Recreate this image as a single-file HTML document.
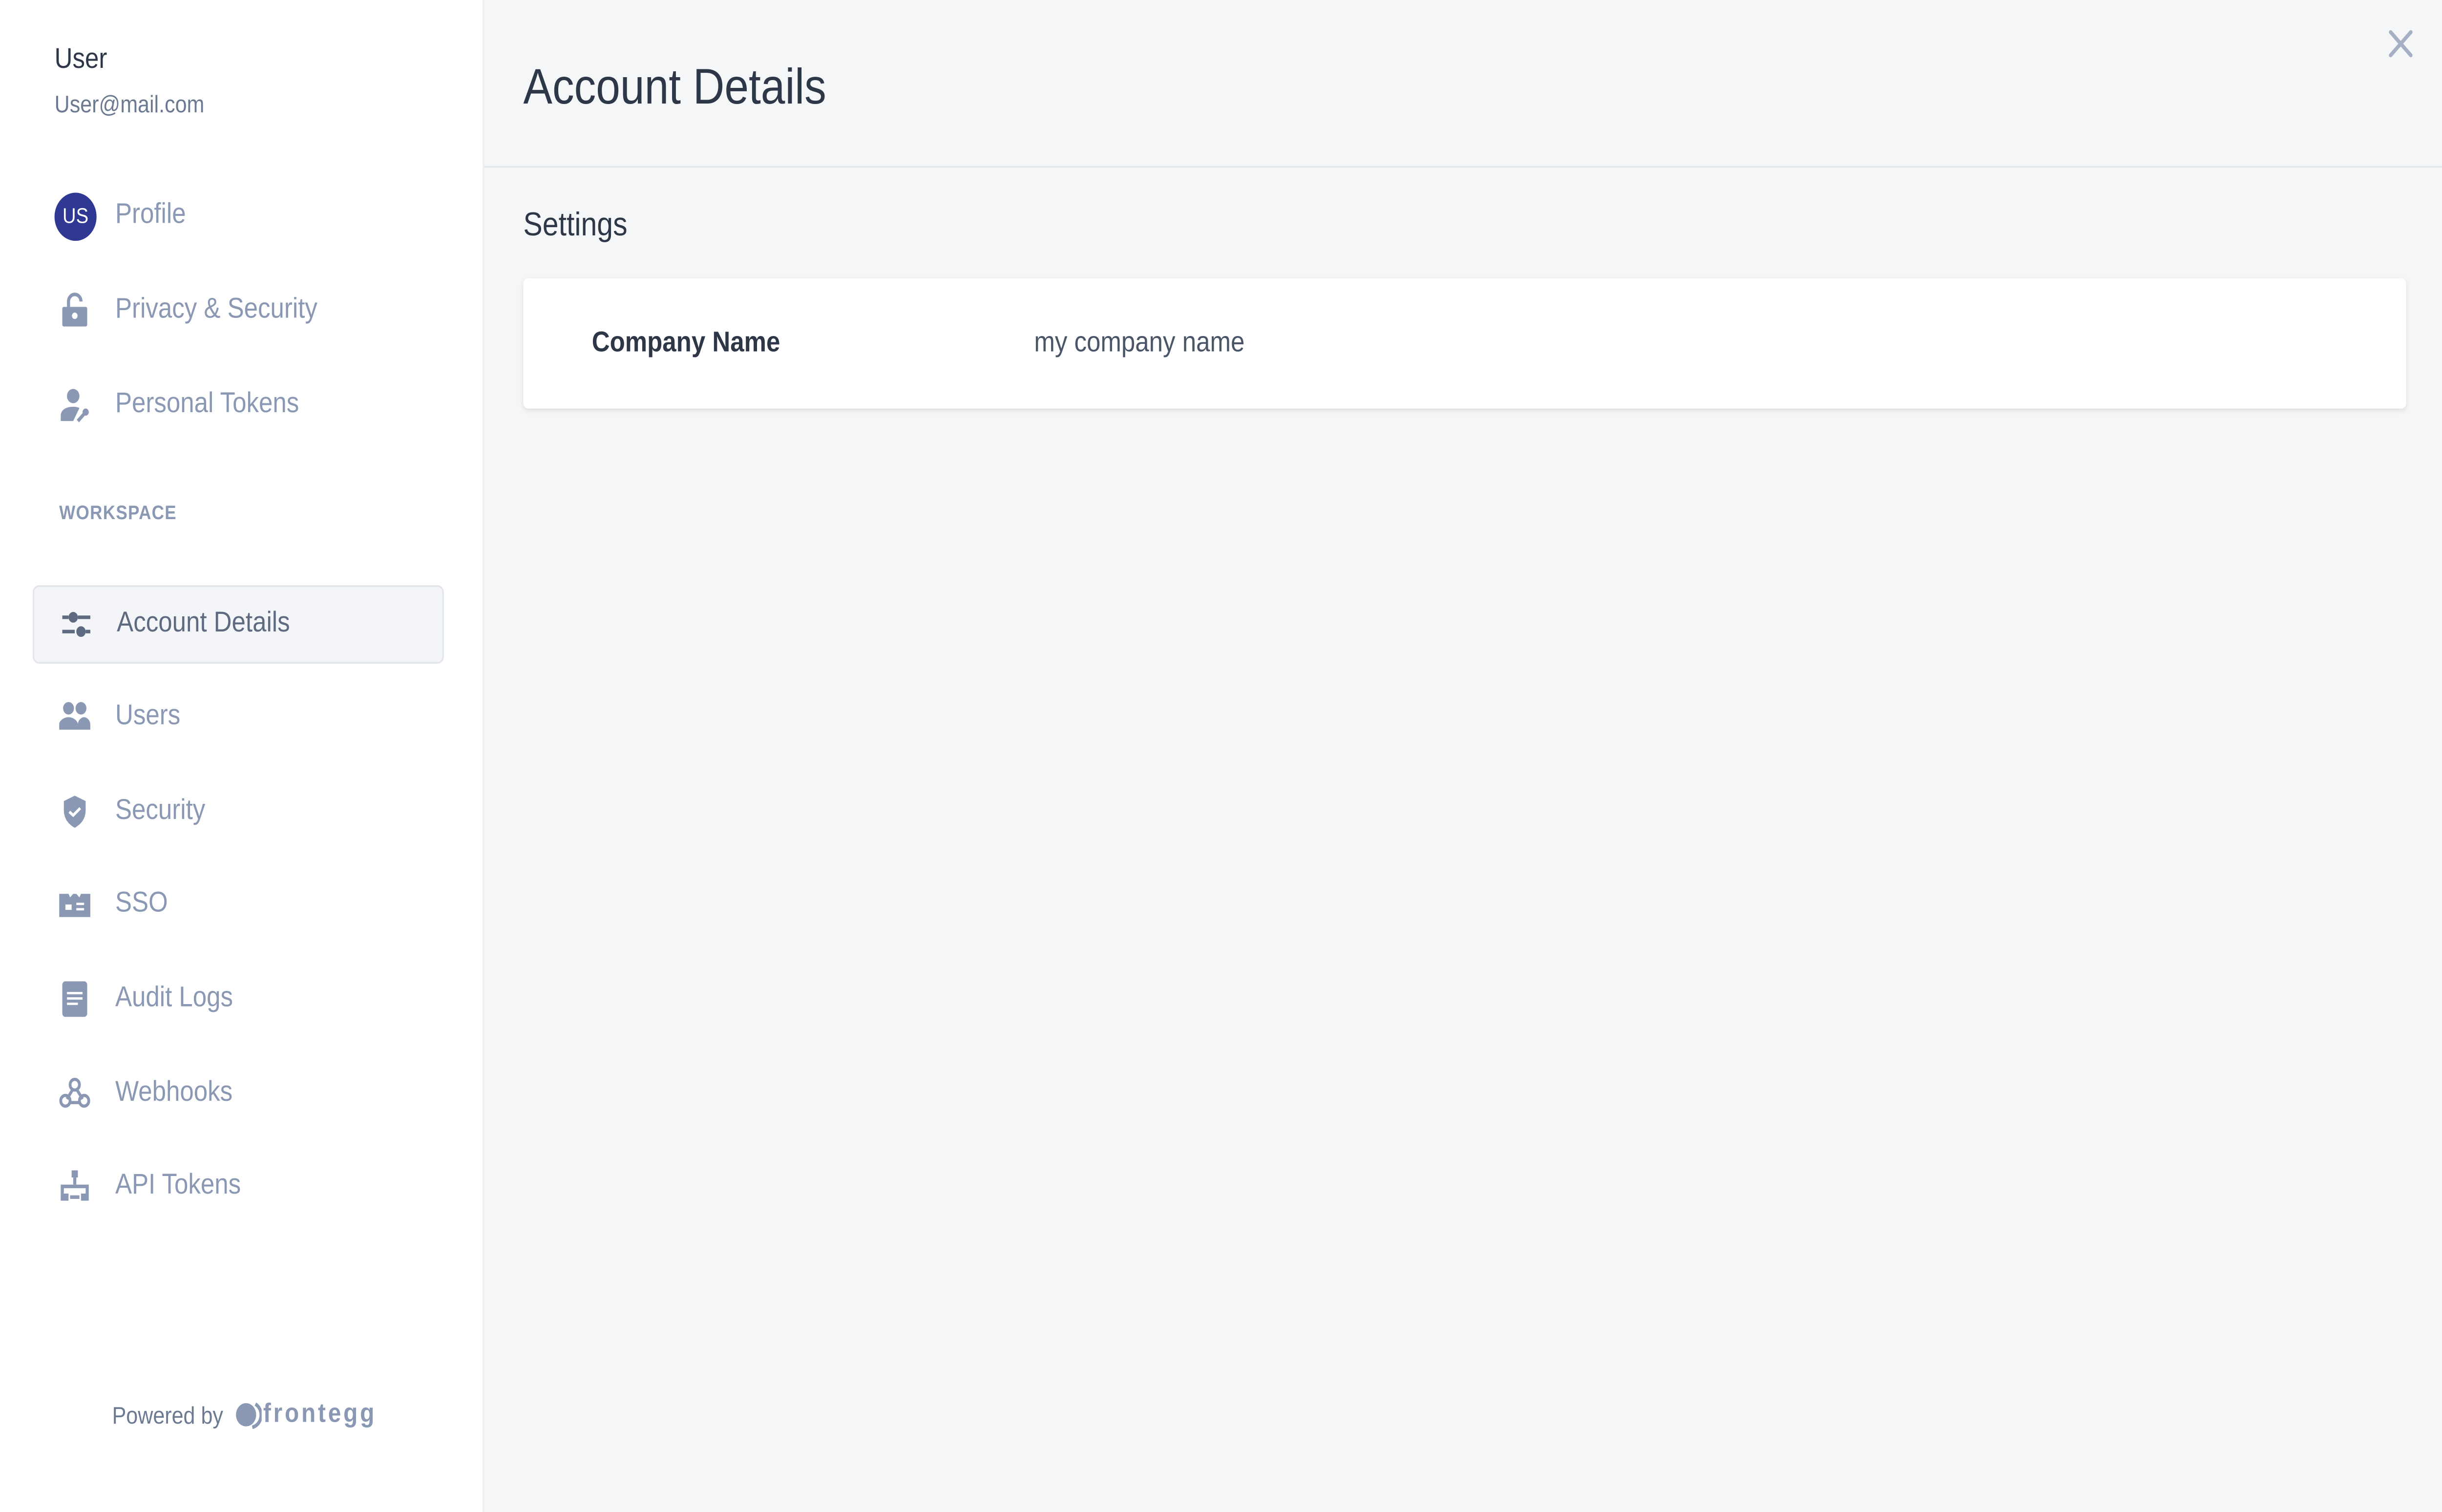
<!DOCTYPE html>
<html><head><meta charset="utf-8"><style>
html,body{margin:0;padding:0;width:100%;height:100%;overflow:hidden;background:#f5f6f8}
#w{position:fixed;left:0;top:0;width:1568px;height:847.5px;overflow:hidden;transform:scale(3.653);transform-origin:0 0;font-family:"Liberation Sans",sans-serif;background:#f5f6f8}
#sb{position:absolute;left:0;top:0;width:310px;height:848px;background:#fff;border-right:1px solid #eceef2}
.nm{position:absolute;left:35px;top:25px;font-size:16px;color:#2d3748}
.em{position:absolute;left:35px;top:51px;font-size:13.5px;color:#6b7a90}
.it{position:absolute;left:21px;width:262px;height:42px;font-size:16px;color:#8a98b4}
.it span{position:absolute;left:53px;top:12px}
.it svg{position:absolute;left:17px;top:11px}
.act{background:#f4f5f8;border:1px solid #e3e6ec;border-radius:4px;color:#5d6a80}
.av{position:absolute;left:14px;top:8px;width:27px;height:27px;border-radius:50%;background:#2f3993;color:#fff;font-size:12px;text-align:center;line-height:27px}
.ws{position:absolute;left:38px;top:282px;font-size:11px;font-weight:bold;color:#8a98b4;letter-spacing:.4px}
.pw{position:absolute;left:72px;top:786px;font-size:13.5px;color:#6b7a90}
.fe{position:absolute;left:169px;top:784px;font-size:15px;font-weight:bold;color:#8a98b4;letter-spacing:1.5px}
h1{position:absolute;left:336px;top:33px;margin:0;font-size:28px;font-weight:normal;color:#2d3748}
.ln{position:absolute;left:311px;top:93px;width:1257px;height:1px;background:#e3e6ec}
.st{position:absolute;left:336px;top:115px;font-size:18.5px;color:#2d3748}
.cd{position:absolute;left:336px;top:156px;width:1209px;height:73px;background:#fff;border-radius:3px;box-shadow:0 1px 3px rgba(0,0,0,.1)}
.l1{position:absolute;left:44px;top:28px;font-size:16px;font-weight:bold;color:#2d3748}
.l2{position:absolute;left:328px;top:28px;font-size:16px;color:#4a5568}
.x{position:absolute;left:1532px;top:15px}
</style></head><body><div id="w">
<div id="sb">
<div class="nm">User</div><div class="em">User@mail.com</div>
<div class="it" style="top:100px"><div class="av">US</div><span>Profile</span></div>
<div class="it" style="top:153px"><svg width="20" height="20" viewBox="0 0 20 20"><rect x="2" y="8" width="16" height="11" rx="1" fill="#8a98b4"/><path d="M6 8V5a4 4 0 0 1 8 0" fill="none" stroke="#8a98b4" stroke-width="2"/><circle cx="10" cy="13" r="1.8" fill="#fff"/></svg><span>Privacy &amp; Security</span></div>
<div class="it" style="top:206px"><svg width="20" height="20" viewBox="0 0 20 20"><circle cx="9" cy="5" r="4" fill="#8a98b4"/><path d="M1 19v-3c0-3 3-5 8-5 2 0 3 .3 4 .7L9 19z" fill="#8a98b4"/><path d="M12 19l5-5" stroke="#8a98b4" stroke-width="2"/><circle cx="17" cy="14" r="2" fill="#8a98b4"/></svg><span>Personal Tokens</span></div>
<div class="ws">WORKSPACE</div>
<div class="it act" style="top:328px"><svg width="20" height="20" viewBox="0 0 20 20"><rect x="1" y="5" width="4" height="2" fill="#5d6a80"/><circle cx="8" cy="6" r="3" fill="#5d6a80"/><rect x="11" y="5" width="8" height="2" fill="#5d6a80"/><rect x="1" y="13" width="8" height="2" fill="#5d6a80"/><circle cx="13" cy="14" r="3" fill="#5d6a80"/><rect x="16" y="13" width="3" height="2" fill="#5d6a80"/></svg><span>Account Details</span></div>
<div class="it" style="top:381px"><svg width="20" height="20" viewBox="0 0 20 20"><circle cx="6" cy="5" r="3.5" fill="#8a98b4"/><circle cx="14" cy="5" r="3.5" fill="#8a98b4"/><path d="M0 17v-3c0-2 3-4 6-4s6 2 6 4v3zM12 17v-3c0-2 2-4 4-4s4 2 4 4v3z" fill="#8a98b4"/></svg><span>Users</span></div>
<div class="it" style="top:434px"><svg width="20" height="20" viewBox="0 0 20 20"><path d="M10 1L3 4v5c0 5 3 8 7 10 4-2 7-5 7-10V4z" fill="#8a98b4"/><path d="M6.5 10l2.5 2 4.5-4" fill="none" stroke="#fff" stroke-width="1.6"/></svg><span>Security</span></div>
<div class="it" style="top:486px"><svg width="20" height="20" viewBox="0 0 20 20"><path d="M0 4h6l1 2 2-2h2l2 2 1-2h6v13H0z" fill="#8a98b4"/><rect x="4" y="10" width="4" height="3" fill="#fff"/><rect x="11" y="9" width="5" height="1.3" fill="#fff"/><rect x="11" y="12" width="5" height="1.3" fill="#fff"/></svg><span>SSO</span></div>
<div class="it" style="top:539px"><svg width="20" height="20" viewBox="0 0 20 20"><rect x="2" y="0" width="16" height="20" rx="2" fill="#8a98b4"/><rect x="5" y="6" width="10" height="1.3" fill="#fff"/><rect x="5" y="9" width="10" height="1.3" fill="#fff"/><rect x="5" y="12" width="7" height="1.3" fill="#fff"/></svg><span>Audit Logs</span></div>
<div class="it" style="top:592px"><svg width="20" height="20" viewBox="0 0 20 20" fill="none" stroke="#8a98b4" stroke-width="1.8"><circle cx="10" cy="5" r="3"/><circle cx="4" cy="14" r="3"/><circle cx="16" cy="14" r="3"/><path d="M8.5 8L5 13M11.5 8L15 13M7 15h6"/></svg><span>Webhooks</span></div>
<div class="it" style="top:644px"><svg width="20" height="20" viewBox="0 0 20 20" fill="#8a98b4"><rect x="8" y="1" width="4" height="4"/><rect x="9" y="5" width="2" height="4"/><rect x="1" y="9" width="18" height="2"/><rect x="1" y="11" width="2" height="3"/><rect x="17" y="11" width="2" height="3"/><rect x="1" y="14" width="5" height="4"/><rect x="14" y="14" width="5" height="4"/><rect x="7" y="15" width="6" height="2"/></svg><span>API Tokens</span></div>
<div class="pw">Powered by</div>
<svg style="position:absolute;left:151px;top:785px" width="17" height="16" viewBox="0 0 17 16"><circle cx="7" cy="8" r="6.5" fill="#8a98b4"/><path d="M13 2a7 7 0 0 1-2 13" fill="none" stroke="#8a98b4" stroke-width="2"/></svg>
<div class="fe">frontegg</div>
</div>
<h1>Account Details</h1>
<div class="ln"></div>
<div class="st">Settings</div>
<div class="cd"><div class="l1">Company Name</div><div class="l2">my company name</div></div>
<svg class="x" width="19" height="19" viewBox="0 0 19 19"><path d="M3 3l13 13M16 3L3 16" stroke="#a6b0c4" stroke-width="2.2" stroke-linecap="round"/></svg>
</div>
<script>
(function(){var w=document.getElementById('w');function f(){var sx=window.innerWidth/1568,sy=window.innerHeight/847.5;w.style.transform='scale('+sx+','+sy+')';}f();window.addEventListener('resize',f);})();
</script>
</body></html>
